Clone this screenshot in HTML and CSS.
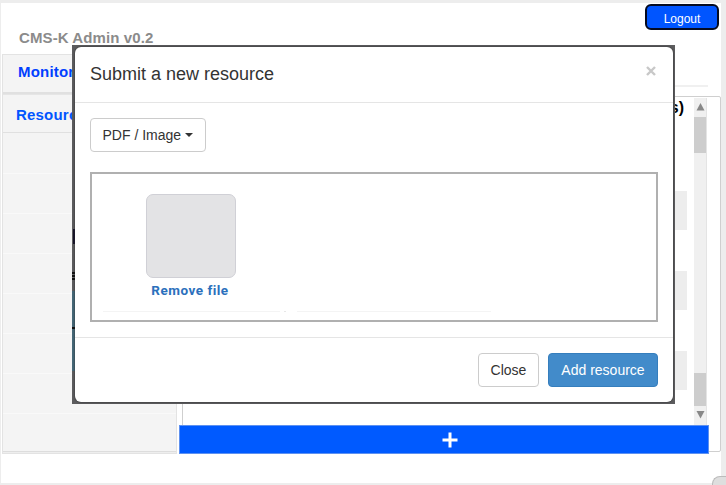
FILE: index.html
```
<!DOCTYPE html>
<html lang="en">
<head>
<meta charset="utf-8">
<title>CMS-K Admin</title>
<link rel="stylesheet" href="styles.css">
</head>
<body>
<div class="page">
  <header class="top"><h1 class="brand">CMS-K Admin v0.2</h1><button class="logout">Logout</button></header>
  <div class="columns">
    <nav class="sidebar">
      <a class="tab monitor">Monitor</a>
      <a class="tab resources">Resources</a>
      <div class="slot"></div><div class="slot"></div><div class="slot"></div><div class="slot"></div>
      <div class="slot"></div><div class="slot"></div><div class="slot"></div><div class="slot"></div>
    </nav>
    <main class="main">
      <div class="rule"></div>
      <section class="panel">
        <div class="table">
          <div class="thead">Action(s)</div>
          <div class="row"></div><div class="row odd"></div><div class="row"></div><div class="row odd"></div><div class="row"></div><div class="row odd"></div>
        </div>
        <div class="scroll">
          <svg class="arrow" viewBox="0 0 13 18"><path d="M2.5 12h8l-4-7.5z"/></svg>
          <div class="thumb first"></div>
          <div class="track"></div>
          <div class="thumb second"></div>
          <svg class="arrow" viewBox="0 0 13 18"><path d="M2.5 4.5h8l-4 7.5z"/></svg>
        </div>
      </section>
      <button class="add" aria-label="Add"><svg viewBox="0 0 16 16"><path d="M8 .5v15M.5 8h15"/></svg></button>
    </main>
  </div>
</div>
<div class="corner"></div>
<div class="backdrop">
  <div class="edge"><i class="mark tee"></i><i class="mark lines"></i><i class="strip"></i></div>
  <div class="modal">
    <div class="modal-head"><h2>Submit a new resource</h2><button class="dismiss" aria-label="Dismiss"><svg viewBox="0 0 10 10"><path d="M1 1l8 8M9 1l-8 8"/></svg></button></div>
    <div class="modal-body">
      <button class="btn picker">PDF / Image <span class="caret"></span></button>
      <div class="drop">
        <div class="file"><div class="thumbnail"></div><a class="remove">Remove file</a></div>
        <div class="lines-row"><span class="hair one"></span><span class="hair dot"></span><span class="hair two"></span></div>
      </div>
    </div>
    <div class="modal-foot"><button class="btn close">Close</button><button class="btn primary">Add resource</button></div>
  </div>
</div>
</body>
</html>
```
FILE: styles.css
```
* { box-sizing: border-box; }
body { margin: 0; height: 485px; padding: 3px 5px 2px 1px; overflow: hidden; background: #ededed; font-family: "Liberation Sans", Arial, sans-serif; }
button { font-family: inherit; margin: 0; }
.page { height: 480px; padding-left: 1px; background: #fff; }
.top { height: 51px; display: flex; justify-content: space-between; align-items: flex-start; padding: 1px 2px 0 17px; }
.brand { margin: 25px 0 0; font-size: 15px; line-height: 18px; color: #8b8b8b; letter-spacing: .1px; }
.logout { width: 74px; height: 26px; padding: 3px 0 0; border: 2px solid #050b20; border-radius: 6px; background: #0055ff; color: #fff; font-size: 12px; }
.columns { display: flex; height: 400px; }
.sidebar { width: 175px; height: 400px; background: #f4f4f4; border: 1px solid #e3e3e3; box-shadow: inset 0 -1px #eee, inset 0 -2px #ddd; flex: none; }
.tab { display: block; font-size: 15px; font-weight: bold; color: #0040ff; line-height: 18px; letter-spacing: .2px; border-bottom: 2px solid #e0e0e0; }
.monitor { height: 39px; padding: 8px 0 0 15px; }
.resources { height: 39px; padding: 11px 0 0 13px; border-bottom-width: 1px; border-top: 1px solid #e5e5e5; color: #0055ff; }
.slot { height: 40px; border-bottom: 1px solid #f9f9f9; }
.resources + .slot { height: 41px; }
.slot:last-child { height: 39px; border: 0; }
.main { width: 544px; padding-left: 2px; flex: none; }
.rule { width: 529px; height: 33px; border-bottom: 2px solid #f0f0f0; }
.panel { margin: 9px 0 0 3px; width: 539px; height: 356px; border: 1px solid #cfcfcf; border-radius: 2px; padding-top: 1px; display: flex; }
.table { width: 504px; }
.thead { height: 53px; text-align: right; padding-right: 3px; font-size: 16px; line-height: 20px; font-weight: bold; color: #000; }
.row { height: 40px; }
.odd { background: linear-gradient(#ededed 39px, #fff 39px); }
.scroll { width: 13px; height: 327px; margin-left: 7px; display: flex; flex-direction: column; background: #f0f0f0; box-shadow: inset -1px 0 #e4e4e4; }
.arrow { height: 19px; width: 13px; flex: none; fill: #888; }
.thumb { background: #cdcdcd; width: 12px; flex: none; }
.first { height: 36px; }
.second { height: 33px; }
.track { flex: 1; }
.add { position: relative; display: flex; align-items: center; justify-content: center; width: 530px; height: 29px; margin-top: -27px; border: 1px solid #5e91f0; padding: 0 0 0 11px; background: #005aff; }
.add svg { width: 16px; height: 16px; stroke: #fff; stroke-width: 3; }
.corner { position: absolute; left: 712px; top: 476px; width: 14px; height: 9px; border: 1px solid #bbb; border-width: 1px 0 0 1px; border-radius: 8px 0 0 0; background: #dedede; }
.backdrop { position: absolute; left: 72px; top: 45px; width: 603px; height: 359px; background: #5c5c5e; padding: 2px 2px 2px 3px; }
.edge { position: absolute; left: 0; top: 0; width: 5px; height: 357px; }
.mark { position: absolute; left: 0; width: 4px; background: #111; }
.tee { top: 184px; left: 1px; height: 15px; width: 2px; background: #17142b; }
.lines { top: 227px; height: 8px; background: repeating-linear-gradient(#111 0 2px, #686868 2px 3px); }
.strip { position: absolute; top: 246px; left: 0; height: 80px; width: 3px; background: linear-gradient(#456777 36px, #111 36px 38px, #456777 38px); }
.modal { position: relative; height: 355px; background: #fff; border-radius: 6px; box-shadow: 0 0 2px #222; color: #333; }
.modal-head { height: 56px; border-bottom: 1px solid #e5e5e5; padding: 15px 17px 0 15px; display: flex; justify-content: space-between; }
h2 { font-size: 18px; line-height: 24px; margin: 0; font-weight: normal; }
.dismiss { width: 10px; height: 10px; padding: 0; margin-top: 4px; border: 0; background: none; }
.dismiss svg { display: block; width: 10px; height: 10px; stroke: #c8c8c8; stroke-width: 2.4; }
.modal-body { height: 235px; padding: 15px 15px 0; border-bottom: 1px solid #e5e5e5; }
.btn { height: 34px; padding: 0 11.5px; border: 1px solid #ccc; border-radius: 4px; background: #fff; color: #333; font-size: 14px; line-height: 20px; white-space: nowrap; }
.picker { display: flex; align-items: center; width: 116px; }
.caret { border: 4px solid transparent; border-top-color: #333; border-bottom: 0; margin-left: 4px; }
.drop { height: 150px; margin-top: 20px; border: 2px solid #b0b0b0; padding: 20px 11px 0; }
.file { width: 90px; margin-left: 43px; }
.thumbnail { height: 84px; border: 1px solid #d0d0d6; border-radius: 7px; background: #e3e3e5; }
.remove { display: block; text-align: center; white-space: nowrap; font: bold 13.5px/17px Roboto, sans-serif; letter-spacing: .5px; color: #2b70bc; margin: 4px -5px 0 -7px; }
.lines-row { display: flex; margin-top: 12px; }
.hair { height: 1px; background: #f4f4f4; }
.one { width: 177px; }
.dot { width: 2px; margin: 0 11px 0 4px; background: #e7e7e7; }
.two { width: 194px; }
.modal-foot { height: 64px; padding: 15px; display: flex; justify-content: flex-end; gap: 9px; }
.close { width: 61px; }
.primary { width: 110px; background: #428bca; border-color: #357ebd; color: #fff; }
```
